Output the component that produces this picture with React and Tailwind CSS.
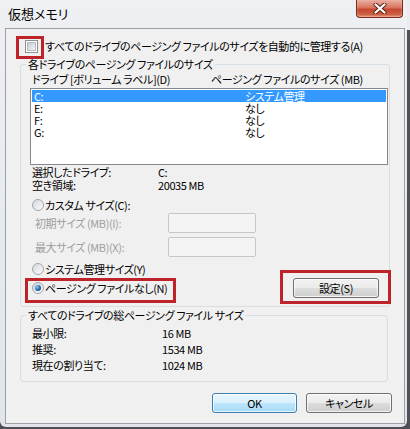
import React from 'react';

const font = "[font-family:'Noto_Sans_CJK_JP','Noto_Sans',sans-serif] [font-feature-settings:'palt']";

const CheckBox = () => (
  <span className="flex h-[13px] w-[13px] shrink-0 items-center justify-center border border-[#8e8f8f] bg-white">
    <span className="h-[9px] w-[9px] border border-[#b4bac1] bg-[linear-gradient(135deg,#c8ced5,#f2f4f6)]" />
  </span>
);

const Radio = ({ on }) => (
  <span className="flex h-[12px] w-[12px] shrink-0 items-center justify-center rounded-full border border-[#a2a7ac] bg-[linear-gradient(135deg,#d3d7db,#fbfbfb)]">
    {on && (
      <span className="h-[6px] w-[6px] rounded-full bg-[radial-gradient(circle_at_35%_35%,#9fcbf2,#2463a3_55%,#0d3b6e)]" />
    )}
  </span>
);

const Button = ({ children, primary = false, className = '' }) => (
  <div
    className={`flex h-[20px] items-center justify-center rounded-[3px] border leading-none text-black shadow-[inset_0_0_0_1px_rgba(255,255,255,0.75)] ${
      primary
        ? 'border-[#3c7fb1] bg-[linear-gradient(#eaf6fd,#d9f0fc_50%,#bee6fd_50%,#a7d9f5)]'
        : 'border-[#707070] bg-[linear-gradient(#f2f2f2,#ebebeb_50%,#dddddd_50%,#cfcfcf)]'
    } ${className}`}
  >
    {children}
  </div>
);

const TextBox = () => (
  <div className="h-[20px] w-[88px] rounded-[2px] border border-[#c6c6c6] bg-[#f4f4f4]" />
);

const drives = [
  { name: 'C:', size: 'システム管理', selected: true },
  { name: 'E:', size: 'なし' },
  { name: 'F:', size: 'なし' },
  { name: 'G:', size: 'なし' },
];

export default function App() {
  return (
    <div className={`h-[429px] w-[410px] overflow-hidden bg-[linear-gradient(#e9ebee_0,#e9ebee_30px,#4d5157_30px)] text-[11px] tracking-[-0.4px] text-black ${font}`}>
      <div className="h-[427px] w-[407px] rounded-b-[6px] bg-[linear-gradient(#eef0f3,#e1e4e8)]">
        {/* Title bar */}
        <div className="flex h-[28px] items-start justify-between">
          <div className="pl-[8px] pt-[6px] text-[13px] leading-[16px] tracking-normal">仮想メモリ</div>
          <div className="mr-[4px] flex h-[18px] w-[47px] items-center justify-center rounded-b-[4px] border border-t-0 border-[#7a2a1e] bg-[linear-gradient(#eab0a2,#d9735e_45%,#c4472e_55%,#d06a4c)] shadow-[inset_0_-1px_2px_rgba(255,220,200,0.7)]">
            <svg width="14" height="11" viewBox="0 0 14 11">
              <path d="M2.5 1.5 L11.5 9.5 M11.5 1.5 L2.5 9.5" stroke="#5a1e14" strokeWidth="4" strokeLinecap="round" />
              <path d="M2.5 1.5 L11.5 9.5 M11.5 1.5 L2.5 9.5" stroke="#ffffff" strokeWidth="2.2" strokeLinecap="round" />
            </svg>
          </div>
        </div>

        {/* Client area */}
        <div className="ml-[5px] flex h-[396px] w-[400px] flex-col border border-[#9aa1a8] bg-[#f0f0f0]">
          {/* Auto manage checkbox */}
          <div className="relative ml-[19px] mt-[9px] flex h-[16px] items-center gap-[7px]">
            <div className="absolute left-[-9px] top-[-2px] h-[23px] w-[28px] border-[3px] border-[#bd2329]" />
            <CheckBox />
            <span className="whitespace-nowrap leading-[16px]">すべてのドライブのページング ファイルのサイズを自動的に管理する(A)</span>
          </div>

          {/* Per-drive group */}
          <fieldset className="ml-[14px] mt-[3px] w-[370px] rounded-[3px] border border-[#d5dfe5] pb-[8px]">
            <legend className="ml-[5px] h-[14px] px-[2px] leading-[14px]">各ドライブのページング ファイルのサイズ</legend>

            <div className="mt-[1px] flex h-[14px] pl-[11px] leading-[14px]">
              <span className="w-[179px]">ドライブ [ボリューム ラベル](D)</span>
              <span>ページング ファイルのサイズ (MB)</span>
            </div>

            <div className="ml-[9px] mt-[2px] h-[77px] w-[358px] border border-[#828790] bg-white p-[1px]">
              {drives.map((d) => (
                <div
                  key={d.name}
                  className={`flex h-[12px] pl-[2px] leading-[12px] ${d.selected ? 'bg-[#3399ff] text-white' : ''}`}
                >
                  <span className="w-[211px]">{d.name}</span>
                  <span>{d.size}</span>
                </div>
              ))}
            </div>

            <div className="mt-[1px] flex h-[13px] pl-[11px] leading-[13px]">
              <span className="w-[126px]">選択したドライブ:</span>
              <span>C:</span>
            </div>
            <div className="flex h-[13px] pl-[11px] leading-[13px]">
              <span className="w-[126px]">空き領域:</span>
              <span>20035 MB</span>
            </div>

            <div className="mt-[6px] flex h-[14px] items-center gap-[1px] pl-[11px] leading-[14px]">
              <Radio />
              <span>カスタム サイズ(C):</span>
            </div>
            <div className="mt-[1px] flex h-[20px] items-center pl-[14px] text-[#9d9d9d]">
              <span className="w-[133px]">初期サイズ (MB)(I):</span>
              <TextBox />
            </div>
            <div className="mt-[4px] flex h-[20px] items-center pl-[14px] text-[#9d9d9d]">
              <span className="w-[133px]">最大サイズ (MB)(X):</span>
              <TextBox />
            </div>

            <div className="mt-[5px] flex h-[14px] items-center gap-[1px] pl-[11px] leading-[14px]">
              <Radio />
              <span>システム管理サイズ(Y)</span>
            </div>

            <div className="mt-[2px] flex h-[20px] items-center justify-between pl-[11px] pr-[10px]">
              <div className="relative flex h-full items-center gap-[1px]">
                <div className="absolute left-[-7px] top-0 h-[25px] w-[151px] border-[3px] border-[#bd2329]" />
                <Radio on />
                <span className="leading-[14px]">ページング ファイルなし(N)</span>
              </div>
              <div className="relative">
                <div className="absolute left-[-13px] top-[-8px] h-[34px] w-[111px] border-[3px] border-[#bd2329]" />
                <Button className="w-[86px]">設定(S)</Button>
              </div>
            </div>
          </fieldset>

          {/* Totals group */}
          <fieldset className="ml-[14px] mt-[1px] w-[368px] rounded-[3px] border border-[#d5dfe5] pb-[8px]">
            <legend className="ml-[5px] h-[14px] px-[2px] leading-[14px]">すべてのドライブの総ページング ファイル サイズ</legend>
            <div className="pt-[3px]">
              {[
                ['最小限:', '16 MB'],
                ['推奨:', '1534 MB'],
                ['現在の割り当て:', '1024 MB'],
              ].map(([label, value]) => (
                <div key={label} className="flex h-[16px] pl-[11px] leading-[16px]">
                  <span className="w-[130px]">{label}</span>
                  <span>{value}</span>
                </div>
              ))}
            </div>
          </fieldset>

          {/* Dialog buttons */}
          <div className="mt-[11px] flex justify-end gap-[9px] pr-[12px]">
            <Button primary className="w-[85px]">OK</Button>
            <Button className="w-[86px]">キャンセル</Button>
          </div>
        </div>
      </div>
    </div>
  );
}
